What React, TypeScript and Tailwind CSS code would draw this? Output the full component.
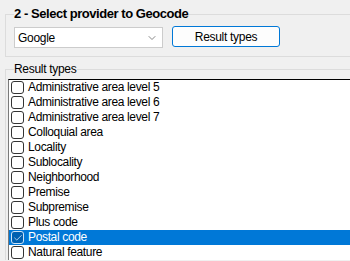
import { Check, ChevronDown } from "lucide-react";

const types = [
  "Administrative area level 5",
  "Administrative area level 6",
  "Administrative area level 7",
  "Colloquial area",
  "Locality",
  "Sublocality",
  "Neighborhood",
  "Premise",
  "Subpremise",
  "Plus code",
  "Postal code",
  "Natural feature",
];

const selected = "Postal code";

const App = () => {
  return (
    <div className="w-[350px] h-[261px] overflow-hidden bg-[#f0f0f0] pt-[14px] pl-[5px] text-black font-['Liberation_Sans',Arial,sans-serif]">
      <div className="h-[43px] border-l border-t border-b border-[#dcdcdc]">
        <div className="-mt-[9px] ml-[8px] w-fit bg-[#f0f0f0] pr-[1px] text-[13px] font-bold leading-[16px] tracking-[-0.45px]">
          2 - Select provider to Geocode
        </div>
        <div className="mt-[5px] ml-[8px] flex items-start">
          <div className="flex h-[21px] w-[149px] items-center justify-between border border-[#cccccc] bg-white pl-[3px] pr-[4px] text-[12px] tracking-[-0.3px]">
            <span>Google</span>
            <ChevronDown className="h-[12px] w-[12px] text-[#606060]" strokeWidth={1.5} />
          </div>
          <button className="-mt-[1px] ml-[9px] flex h-[21px] w-[108px] items-center justify-center rounded-[3px] border border-[#0078d7] bg-[#fdfdfd] text-[12px] tracking-[-0.3px]">
            Result types
          </button>
        </div>
      </div>
      <div className="mt-[12px] border-l border-t border-[#dcdcdc]">
        <div className="-mt-[8px] ml-[8px] w-fit bg-[#f0f0f0] pr-[1px] text-[12px] leading-[14px] tracking-[-0.3px]">
          Result types
        </div>
        <div className="mt-[3px] ml-[2px] border-l border-t border-l-[#7a7a7a] border-t-black bg-white">
          {types.map((t) => {
            const on = t === selected;
            return (
              <div
                key={t}
                className={`flex h-[15px] items-center pl-[2px] text-[12px] leading-[15px] tracking-[-0.35px] ${
                  on ? "bg-[#0078d7] text-white" : ""
                }`}
              >
                <span
                  className={`mr-[4px] flex h-[13px] w-[13px] shrink-0 items-center justify-center rounded-[3px] border ${
                    on ? "border-[#cfe3f5] bg-[#0060b0]" : "border-[#333333] bg-white"
                  }`}
                >
                  {on && <Check className="h-[10px] w-[10px] text-[#cfe3f5]" strokeWidth={2} />}
                </span>
                <span>{t}</span>
              </div>
            );
          })}
        </div>
      </div>
    </div>
  );
};

export default App;
